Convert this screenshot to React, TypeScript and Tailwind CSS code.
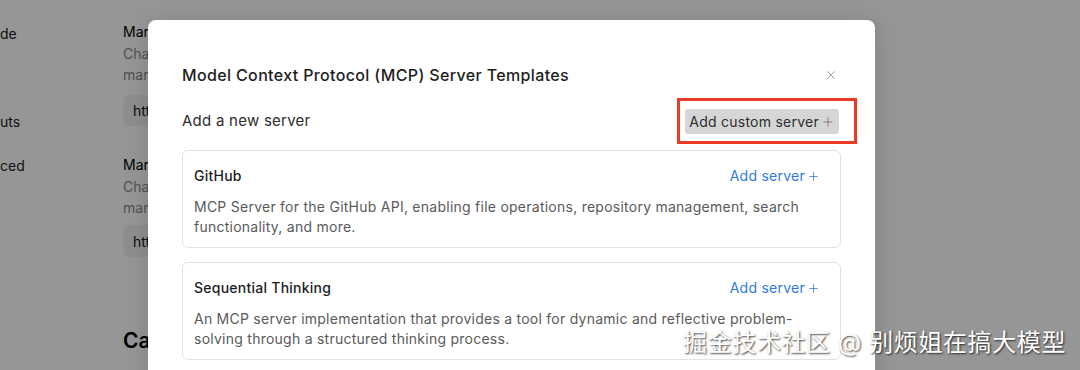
import { Plus, X } from 'lucide-react';

const servers = [
  {
    name: 'GitHub',
    description:
      'MCP Server for the GitHub API, enabling file operations, repository management, search functionality, and more.',
  },
  {
    name: 'Sequential Thinking',
    description:
      'An MCP server implementation that provides a tool for dynamic and reflective problem-solving through a structured thinking process.',
  },
];

function SettingsPage() {
  return (
    <div className="flex h-full bg-white text-[14px] text-[#111]">
      <aside className="w-[123px] shrink-0 text-[14px] leading-5 text-[#222]">
        <div className="h-[6px] w-[46px] rounded-b-md bg-white" />
        <div className="mt-[18px]">de</div>
        <div className="mt-[68px]">uts</div>
        <div className="mt-[24px]">ced</div>
      </aside>
      <main className="flex-1 pt-[22px] whitespace-nowrap">
        <div className="leading-5 text-black">Marketplace URL</div>
        <div className="mt-[1px] leading-[21px] text-[#8a8a8a]">Change the endpoint used by the</div>
        <div className="leading-[21px] text-[#8a8a8a]">marketplace</div>
        <div className="mt-[10px] flex h-[31px] w-[300px] items-center rounded-md bg-[#f2f2f2] px-[10px] text-[#111]">
          https://
        </div>
        <div className="mt-[29px] leading-5 text-black">Marketplace API</div>
        <div className="mt-[1px] leading-[21px] text-[#8a8a8a]">Change the endpoint used by the</div>
        <div className="leading-[21px] text-[#8a8a8a]">marketplace api</div>
        <div className="mt-[7px] flex h-[32px] w-[300px] items-center rounded-md bg-[#f2f2f2] px-[10px] text-[#111]">
          https://
        </div>
        <div className="mt-[72px] text-[21px] font-semibold leading-6 text-black">Cache</div>
      </main>
    </div>
  );
}

function ServerCard({ name, description }: { name: string; description: string }) {
  return (
    <div className="rounded-[6px] border border-[#e2e2e2] px-[11px] pt-[15px] pb-[10px]">
      <div className="flex items-center justify-between leading-5">
        <span className="text-[14px] font-medium text-[#1d1d1d]">{name}</span>
        <button className="mr-[9px] flex items-center gap-[2px] text-[14px] text-[#2f7be0]">
          Add server
          <Plus size={13} strokeWidth={1.5} />
        </button>
      </div>
      <p className="mt-[11px] pr-[10px] text-[14px] leading-5 text-[#5a5a5a]">{description}</p>
    </div>
  );
}

function TemplatesDialog() {
  return (
    <div className="absolute left-[148px] top-[20px] h-[400px] w-[727px] rounded-lg bg-white px-[34px] pt-[45px] tracking-[0.25px] shadow-[0_4px_24px_rgba(0,0,0,0.15)]">
      <div className="flex items-center justify-between leading-5">
        <h2 className="text-[16px] font-medium tracking-[0.36px] text-[#1d1d1d]">
          Model Context Protocol (MCP) Server Templates
        </h2>
        <X size={14} strokeWidth={1.5} className="mr-[3px] text-[#9a9a9a]" />
      </div>
      <div className="mt-[24px] flex items-center justify-between">
        <span className="text-[15px] text-[#2d2d2d]">Add a new server</span>
        <div className="relative mr-[2px]">
          <button className="flex h-[25px] items-center gap-[2px] rounded-[3px] bg-[#d6d6d6] pr-[4px] pl-[4px] text-[14px] text-[#2d2d2d]">
            Add custom server
            <Plus size={14} strokeWidth={1.3} className="text-[#666]" />
          </button>
          <span className="pointer-events-none absolute -top-[11px] -right-[18px] -bottom-[10px] -left-[8px] border-[3px] border-[#ec3b24]" />
        </div>
      </div>
      <div className="mt-[16px] flex flex-col gap-[14px]">
        {servers.map((s) => (
          <ServerCard key={s.name} name={s.name} description={s.description} />
        ))}
      </div>
    </div>
  );
}

export default function App() {
  return (
    <div
      className="relative h-[370px] w-[1080px] overflow-hidden"
      style={{ fontFamily: 'Inter, "Noto Sans CJK SC", sans-serif' }}
    >
      <SettingsPage />
      <div className="absolute inset-0 bg-black/[0.41]" />
      <TemplatesDialog />
      <div className="absolute right-[14px] bottom-[13px] text-[24px] leading-[28px] tracking-[0.6px] text-white [text-shadow:1px_1px_2px_rgba(0,0,0,0.75)]">
        掘金技术社区 @ 别烦姐在搞大模型
      </div>
    </div>
  );
}
